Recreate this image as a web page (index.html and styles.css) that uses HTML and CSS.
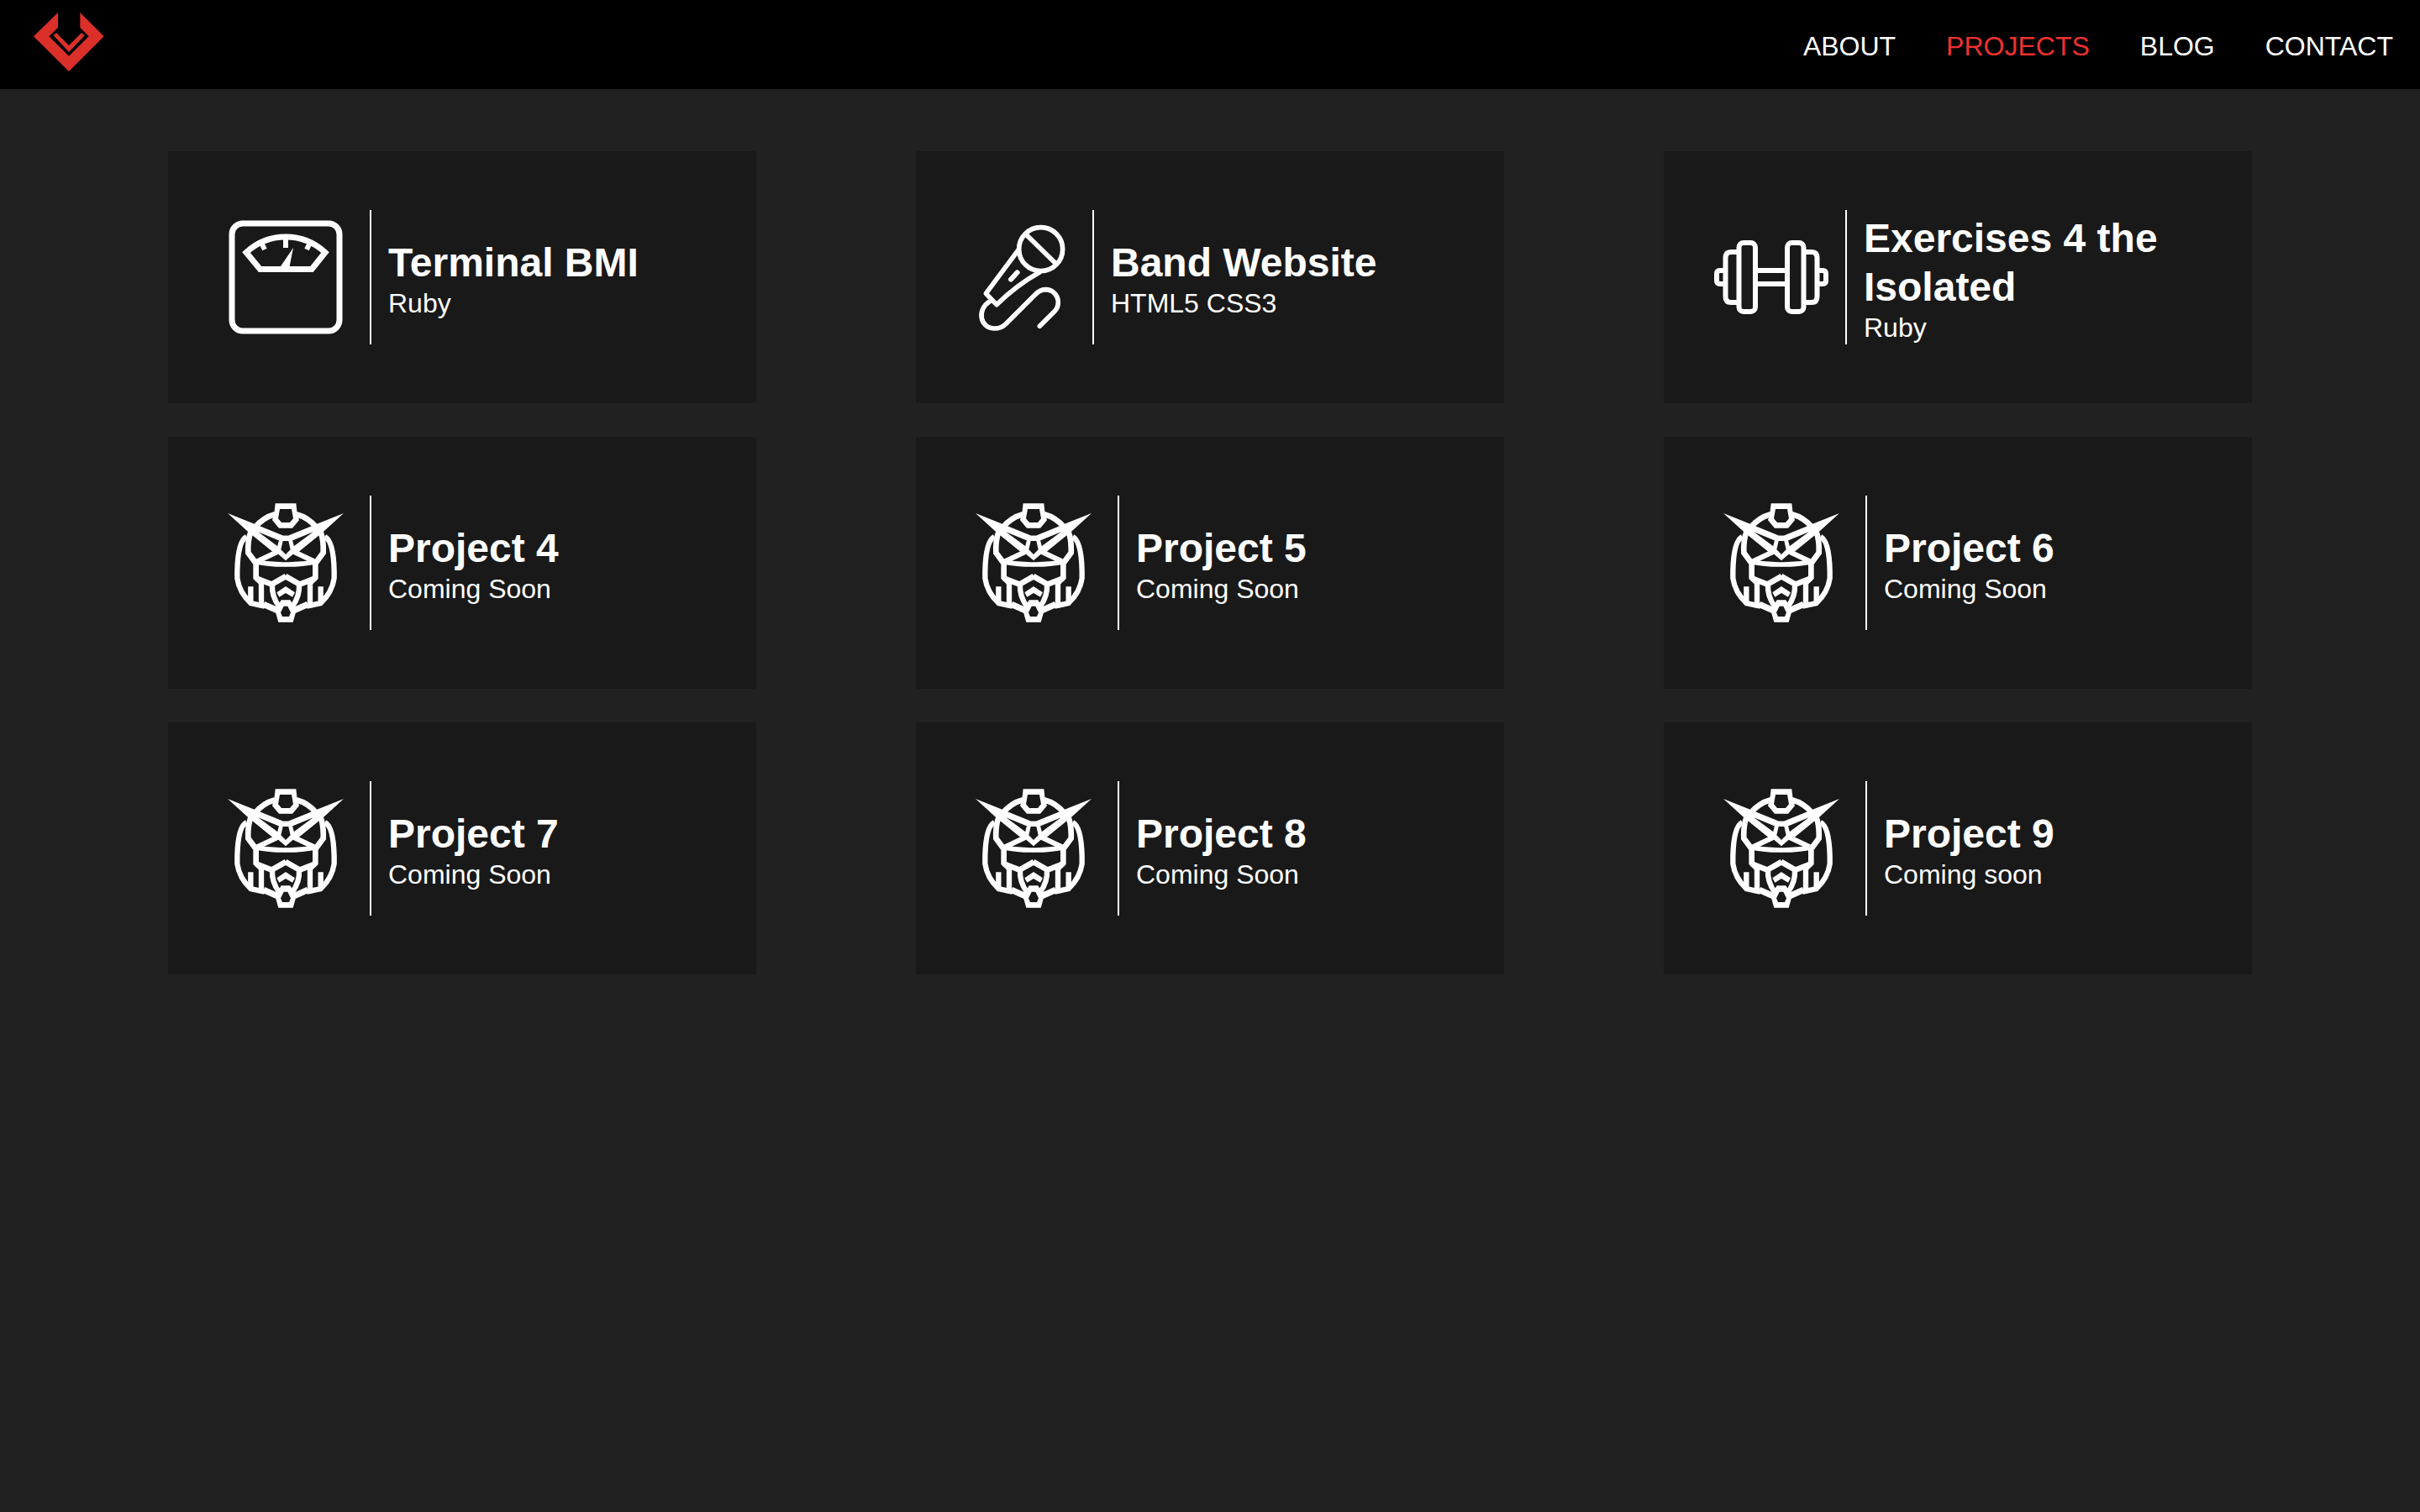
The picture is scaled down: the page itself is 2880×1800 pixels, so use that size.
FILE: index.html
```html
<!DOCTYPE html>
<html lang="en">
<head>
<meta charset="utf-8">
<meta name="viewport" content="width=device-width, initial-scale=1">
<title>Projects</title>
<link rel="stylesheet" href="styles.css">
</head>
<body>
<svg class="sprite" aria-hidden="true">
  <symbol id="helmet" viewBox="30 30 480 480">
    <g id="helmet-half" fill="none" stroke="#fff" stroke-width="20">
      <path d="M232 97Q190 108 160 144"/>
      <path d="M63 93L166 134 262 173 278 173 278 192 250 192 172 160 243 212 236 241 138 161Z" fill="#fff" stroke="none"/>
      <path d="M145 160Q134 190 136 234L164 272V323L184 342"/>
      <path d="M130 177C104 190 98 250 97 300V325Q104 375 145 414L195 425" stroke-width="19"/>
      <path d="M240 231L164 267" stroke-width="18"/>
      <path d="M164 267Q215 277 271 276" stroke-width="17"/>
      <path d="M164 325L220 347 271 318"/>
      <path d="M183 335V430M145 355V412" stroke-width="19"/>
      <path d="M222 345Q219 390 247 427" stroke-width="19"/>
      <path d="M191 418L240 440" stroke-width="22"/>
    </g>
    <use href="#helmet-half" transform="matrix(-1 0 0 1 540 0)"/>
    <path fill="#fff" fill-rule="evenodd" d="M233 58H307L311 93 318 118 294 146H246L222 118 229 93ZM249 78L243 112 255 126H285L297 112 291 78Z"/>
    <path fill="#fff" fill-rule="evenodd" d="M250 174H290L305 232 270 262 235 232ZM260 192L253 223 270 240 287 223 280 192Z"/>
    <path fill="#fff" d="M238 376L270 354 303 376 294 392 270 378 247 392Z"/>
    <path fill="#fff" fill-rule="evenodd" d="M254 403H286L308 440 296 482H244L232 440ZM263 425L252 448 258 462H282L288 448 277 425Z"/>
  </symbol>
</svg>

<header class="header">
  <a class="logo" href="#" aria-label="Home">
    <svg viewBox="60 45 252 210" fill="#db302a" aria-hidden="true">
      <path d="M147 45V98L115 130 186 200 257 130 226 98V45L311 130 186 255 60 130Z"/>
      <path d="M131 127L141 117 186 162 231 117 242 127 186 186Z"/>
    </svg>
  </a>
  <nav class="nav">
    <a href="#">ABOUT</a>
    <a class="active" href="#" aria-current="page">PROJECTS</a>
    <a href="#">BLOG</a>
    <a href="#">CONTACT</a>
  </nav>
</header>

<main class="projects">
  <article class="card">
    <svg class="icon" viewBox="0 0 160 160" fill="none" stroke="#fff" stroke-width="7" aria-hidden="true">
      <rect x="16" y="16" width="128" height="128" rx="13"/>
      <path d="M33 50.5L49.5 70.5H111L127 50.5A69 69 0 0 0 33 50.5Z"/>
      <path d="M80 33V45M51.5 40L55 47M108.5 40L105 47" stroke-width="6"/>
      <path d="M89 45L84 70H72Z" fill="#fff" stroke="none"/>
    </svg>
    <div class="details"><h2>Terminal BMI</h2><p>Ruby</p></div>
  </article>
  <article class="card">
    <svg class="icon icon-mic" viewBox="0 0 390 480" fill="none" stroke="#fff" stroke-width="17" stroke-linecap="round" stroke-linejoin="round" aria-hidden="true">
      <circle cx="266" cy="140" r="78"/>
      <path d="M215 89L318 190M184 145L70 298 108 338Q180 268 262 222"/>
      <path d="M182 223L159 248" stroke-width="18"/>
      <path d="M84 326C36 356 48 423 102 423Q124 423 140 408L245 303Q262 285 282 284C309 284 328 305 328 330Q328 349 314 363L262 415"/>
    </svg>
    <div class="details"><h2>Band Website</h2><p>HTML5 CSS3</p></div>
  </article>
  <article class="card">
    <svg class="icon icon-dumbbell" viewBox="0 0 136 160" fill="none" stroke="#fff" stroke-width="6" aria-hidden="true">
      <rect x="29.5" y="39" width="19.5" height="82" rx="5.5"/>
      <rect x="87" y="39" width="19.5" height="82" rx="5.5"/>
      <path d="M29 50H20Q13.5 50 13.5 57V103Q13.5 110 20 110H29M107 50H116Q122.5 50 122.5 57V103Q122.5 110 116 110H107"/>
      <path d="M13 72H7Q3 72 3 76V84Q3 88 7 88H13M123 72H129Q133 72 133 76V84Q133 88 129 88H123M49 72H87M49 88H87"/>
    </svg>
    <div class="details"><h2>Exercises 4 the Isolated</h2><p>Ruby</p></div>
  </article>
  <article class="card">
    <svg class="icon" aria-hidden="true"><use href="#helmet"/></svg>
    <div class="details"><h2>Project 4</h2><p>Coming Soon</p></div>
  </article>
  <article class="card">
    <svg class="icon" aria-hidden="true"><use href="#helmet"/></svg>
    <div class="details"><h2>Project 5</h2><p>Coming Soon</p></div>
  </article>
  <article class="card">
    <svg class="icon" aria-hidden="true"><use href="#helmet"/></svg>
    <div class="details"><h2>Project 6</h2><p>Coming Soon</p></div>
  </article>
  <article class="card">
    <svg class="icon" aria-hidden="true"><use href="#helmet"/></svg>
    <div class="details"><h2>Project 7</h2><p>Coming Soon</p></div>
  </article>
  <article class="card">
    <svg class="icon" aria-hidden="true"><use href="#helmet"/></svg>
    <div class="details"><h2>Project 8</h2><p>Coming Soon</p></div>
  </article>
  <article class="card">
    <svg class="icon" aria-hidden="true"><use href="#helmet"/></svg>
    <div class="details"><h2>Project 9</h2><p>Coming soon</p></div>
  </article>
</main>
</body>
</html>
```
FILE: styles.css
```css
* {
  box-sizing: border-box;
  margin: 0;
  padding: 0;
}

body {
  background: #212121;
  color: #fff;
  font-family: "Liberation Sans", Arial, sans-serif;
  font-size: 32px;
  line-height: 38px;
}

.sprite {
  position: absolute;
  width: 0;
  height: 0;
}

.header {
  display: flex;
  align-items: center;
  justify-content: space-between;
  min-height: 106px;
  padding: 0 32px 0 40px;
  background: #000;
}

.logo {
  padding-bottom: 6px;
}

.logo svg {
  display: block;
  width: 84px;
  height: 70px;
}

.nav {
  display: flex;
  gap: 60px;
  padding-top: 4px;
}

.nav a {
  color: #fff;
  text-decoration: none;
}

.nav .active {
  color: #ee312f;
}

.projects {
  display: grid;
  grid-template-columns: repeat(3, 1fr);
  gap: 40px 190px;
  padding: 74px 200px;
}

.card {
  display: flex;
  align-items: center;
  gap: 20px;
  min-height: 300px;
  padding: 60px;
  background: #191919;
}

.icon {
  flex: none;
  width: 160px;
  height: 160px;
}

.icon-mic {
  width: 130px;
}

.icon-dumbbell {
  width: 136px;
}

.details {
  display: flex;
  flex-direction: column;
  justify-content: center;
  min-height: 160px;
  padding: 4px 0 0 20px;
  border-left: 2px solid #fff;
}

.details h2 {
  font-size: 48px;
  line-height: 58px;
}
```
